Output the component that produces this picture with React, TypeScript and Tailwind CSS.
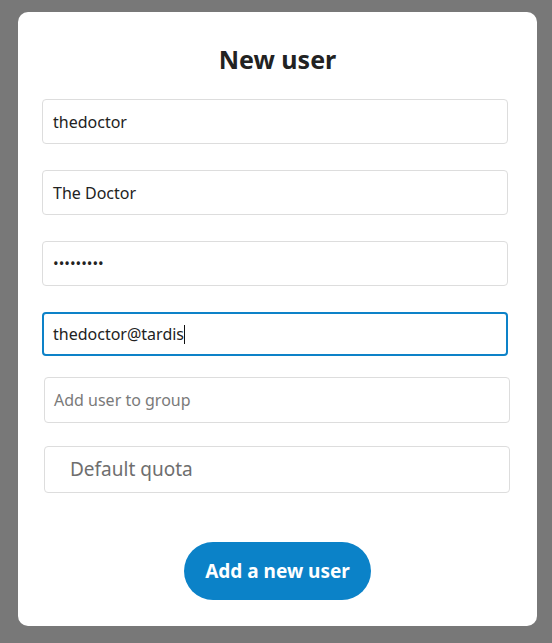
import React from "react";

export default function App() {
  const font = { fontFamily: '"Noto Sans", "Open Sans", sans-serif' };
  return (
    <div className="w-[552px] h-[643px] bg-[#787878] pt-[12px] pl-[18px]" style={font}>
      <div className="w-[519px] h-[614px] bg-white rounded-[10px] flex flex-col pt-[31px]">
        <h1 className="text-center text-[25px] leading-[32px] font-bold text-[#222222]">New user</h1>
        <div className="ml-[24px] mt-[24px] w-[466px] h-[45px] border border-[#dddddd] rounded-[4px] flex items-center pl-[10px] text-[16px] text-[#222222]">
          thedoctor
        </div>
        <div className="ml-[24px] mt-[26px] w-[466px] h-[45px] border border-[#dddddd] rounded-[4px] flex items-center pl-[10px] text-[16px] text-[#222222]">
          The Doctor
        </div>
        <div className="ml-[24px] mt-[26px] w-[466px] h-[45px] border border-[#dddddd] rounded-[4px] flex items-center pl-[10px] text-[15px] text-[#222222]">
          •••••••••
        </div>
        <div className="ml-[24px] mt-[26px] w-[466px] h-[44px] border-2 border-[#0d82c8] rounded-[4px] flex items-center pl-[9px] text-[16px] text-[#222222]">
          <span>thedoctor@tardis</span>
          <span className="inline-block w-[1px] h-[19px] bg-[#111111]" />
        </div>
        <div className="ml-[26px] mt-[21px] w-[466px] h-[46px] border border-[#dddddd] rounded-[4px] flex items-center pl-[9px] text-[16px] text-[#7a7a7a]">
          Add user to group
        </div>
        <div className="ml-[26px] mt-[23px] w-[466px] h-[47px] border border-[#dddddd] rounded-[4px] flex items-center pl-[25px] text-[19px] text-[#6e6e6e]">
          Default quota
        </div>
        <div className="mt-[49px] flex justify-center">
          <button className="w-[187px] h-[58px] rounded-full bg-[#0b82c8] text-white text-[19px] font-bold">
            Add a new user
          </button>
        </div>
      </div>
    </div>
  );
}
